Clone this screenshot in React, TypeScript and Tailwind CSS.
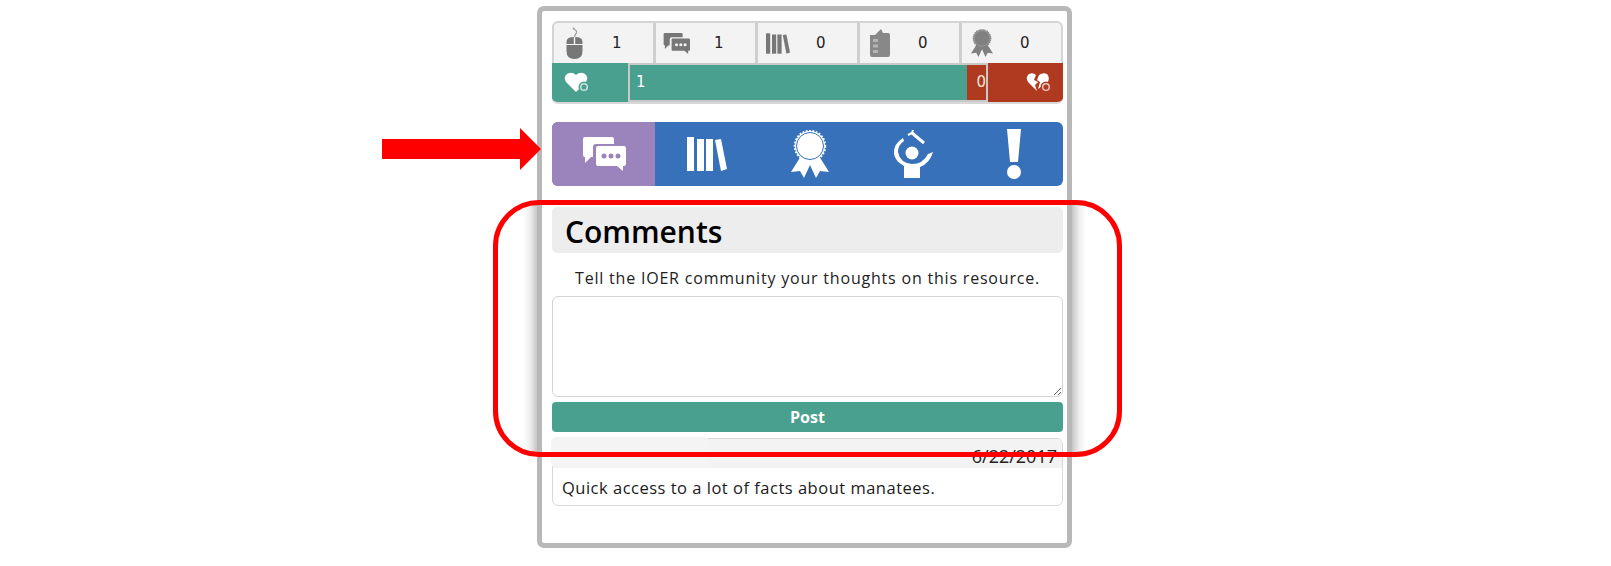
const Mouse = () => (
  <svg width="17" height="32" viewBox="0 0 17 32">
    <path d="M8.500 10 C8.500 7 11 7 10.500 4.500 C10 2.500 7.500 2.500 7 0.500" fill="none" stroke="#999" strokeWidth="1.200" />
    <path d="M0.500 15 Q0.500 10 7.800 10 V17 H0.500 Z M9.200 10 Q16.500 10 16.500 15 V17 H9.200 Z M0.500 18 H16.500 V24 Q16.500 32 8.500 32 Q0.500 32 0.500 24 Z" fill="#777" />
  </svg>
);

const Comments = ({ color, dot }: { color: string; dot: string }) => (
  <svg viewBox="0 0 44 34" className="w-full h-full">
    <path d="M3 0 H30 Q32 0 32 2 V7 H14 Q11 7 11 10 V20 H9 L3 26 V20 Q1 20 1 18 V2 Q1 0 3 0 Z" fill={color} />
    <path d="M16 9 H42 Q44 9 44 11 V27 Q44 29 42 29 H41 V34 L35 29 H16 Q14 29 14 27 V11 Q14 9 16 9 Z" fill={color} />
    <circle cx="22" cy="19" r="2.500" fill={dot} />
    <circle cx="29" cy="19" r="2.500" fill={dot} />
    <circle cx="36" cy="19" r="2.500" fill={dot} />
  </svg>
);

const Books = ({ color }: { color: string }) => (
  <svg viewBox="0 0 40 34" className="w-full h-full">
    <rect x="0" y="0" width="7" height="34" fill={color} />
    <rect x="10" y="2" width="7" height="32" fill={color} />
    <rect x="19" y="2" width="7" height="32" fill={color} />
    <path d="M28 3 L34 2 L40 32 L34 34 Z" fill={color} />
  </svg>
);

const Ribbon = ({ color, hole }: { color: string; hole: string }) => (
  <svg viewBox="0 0 38 48" className="w-full h-full">
    <path d="M10 26 L0 42 L9 41 L13 48 L19 35 L25 48 L29 41 L38 42 L28 26 Z" fill={color} />
    <circle cx="19" cy="16" r="15" fill={color} stroke={color} strokeWidth="2.500" strokeDasharray="1.800 1.500" />
    <circle cx="19" cy="16" r="13.500" fill="none" stroke={hole} strokeWidth="1" />
  </svg>
);

const Clipboard = () => (
  <svg width="20" height="28" viewBox="0 0 20 28">
    <path d="M0 6 H5 L7 4 L11 0 L13 4 H18 Q20 4 20 6 V26 Q20 28 18 28 H2 Q0 28 0 26 Z" fill="#888" />
    <path d="M3 10 H8 V13 H3 Z M3 15.500 H8 V18.500 H3 Z M3 21 H8 V24 H3 Z" fill="#b5b5b5" />
  </svg>
);

const Person = () => (
  <svg width="40" height="48" viewBox="0 0 40 48" fill="white">
    <path d="M19 3 L31 13" stroke="white" strokeWidth="3" />
    <path d="M15 5 L19 3 L20 0" stroke="white" strokeWidth="2" fill="none" />
    <circle cx="19" cy="23" r="6.500" />
    <path d="M10 8 Q0 14 1 24 Q2 31 11 36 V48 H27 V37 Q37 33 40 22 L35 24 Q30 34 19 34 Q7 33 5 22 Q5 15 11 11 Z" />
  </svg>
);

const Exclamation = () => (
  <svg width="16" height="50" viewBox="0 0 16 50" fill="white">
    <path d="M1 0 H15 L12 33 H4 Z" />
    <circle cx="8" cy="43" r="7" />
  </svg>
);

const Heart = ({ broken, bg }: { broken?: boolean; bg: string }) => (
  <svg width="26" height="21" viewBox="0 0 26 21">
    <path
      d={
        broken
          ? "M11 19 L2 10 Q-1 5 3 2 Q7 0 10 3 L8 8 L12 10 L9 13 Z M12 17 L14 10 L11 8 L13 3 Q17 0 21 2 Q24 5 22 10 Z"
          : "M12 20 L2 10 Q-1 5 3 2 Q8 -1 12 3 Q16 -1 21 2 Q25 5 22 10 Z"
      }
      fill="white"
    />
    <circle cx="20" cy="15" r="5.500" fill={bg} />
    <circle cx="20" cy="15" r="3.300" fill="none" stroke="white" strokeOpacity="0.7" strokeWidth="1.500" />
  </svg>
);

const stats = [
  { icon: <Mouse />, value: "1" },
  { icon: <span className="block w-[27px] h-[21px]"><Comments color="#777" dot="#f3f3f3" /></span>, value: "1" },
  { icon: <span className="block w-[24px] h-[21px]"><Books color="#777" /></span>, value: "0" },
  { icon: <Clipboard />, value: "0" },
  { icon: <span className="block w-[22px] h-[28px]"><Ribbon color="#808080" hole="#a5a5a5" /></span>, value: "0" },
];

export default function App() {
  return (
    <div className="relative w-[1611px] h-[566px] bg-white overflow-hidden pl-[537px] pt-[6px] font-['Open_Sans','Noto_Sans',sans-serif] text-[#222]">
      {/* Resource panel */}
      <div className="w-[535px] h-[542px] bg-white border-[5px] border-[#b8b8b8] rounded-[7px] pl-[10px] pr-[4px] pt-[10px]">
        {/* Stats */}
        <div className="flex h-[42px] bg-[#f3f3f3] border-2 border-b-0 border-[#d4d4d4] rounded-t-[6px]">
          {stats.map((s, i) => (
            <div key={i} className={`flex-1 flex items-center pl-[4px] ${i < 4 ? "border-r-[3px] border-[#cfcfcf]" : ""}`}>
              <span className="w-[32px] flex justify-center">{s.icon}</span>
              <span className="ml-[22px] font-['DejaVu_Sans',sans-serif] text-[15px]">{s.value}</span>
            </div>
          ))}
        </div>

        {/* Likes bar */}
        <div className="flex h-[41px] border-b-2 border-[#d8d8d8] rounded-b-[6px] overflow-hidden text-white font-['DejaVu_Sans',sans-serif] text-[15px]">
          <div className="w-[76px] bg-[#4aa08f] flex items-center pl-[12px]">
            <Heart bg="#4aa08f" />
          </div>
          <div className="flex flex-1 border-2 border-[#c9c9c9]">
            <div className="flex-1 bg-[#4aa08f] flex items-center pl-[6px]">1</div>
            <div className="w-[19px] bg-[#b03a20] flex items-center justify-end text-[#f5e6d8]">0</div>
          </div>
          <div className="w-[75px] bg-[#b03a20] flex items-center justify-end pr-[11px]">
            <Heart broken bg="#b03a20" />
          </div>
        </div>

        {/* Tabs */}
        <div className="flex h-[64px] mt-[18px] rounded-[6px] overflow-hidden bg-[#3671b9]">
          <div className="w-[103px] bg-[#9b84bb] flex items-center justify-center">
            <span className="block w-[44px] h-[34px]"><Comments color="white" dot="#9b84bb" /></span>
          </div>
          <div className="w-[103px] flex items-center justify-center">
            <span className="block w-[40px] h-[34px]"><Books color="white" /></span>
          </div>
          <div className="w-[103px] flex items-center justify-center">
            <span className="block w-[38px] h-[48px]"><Ribbon color="white" hole="#3671b9" /></span>
          </div>
          <div className="w-[103px] flex items-center justify-center">
            <Person />
          </div>
          <div className="w-[99px] flex items-center justify-center">
            <Exclamation />
          </div>
        </div>

        {/* Comments */}
        <h2 className="mt-[21px] h-[46px] bg-[#ededed] rounded-[5px] pl-[13px] pt-[3px] flex items-center text-[30px] font-semibold text-black">
          Comments
        </h2>
        <p className="mt-[14px] h-[22px] text-center text-[16px] leading-[22px] tracking-[0.8px]">
          Tell the IOER community your thoughts on this resource.
        </p>
        <textarea className="block mt-[7px] w-full h-[101px] bg-white border-[1.500px] border-[#d4d4d4] rounded-[6px] outline-none" />
        <button className="block mt-[5px] w-full h-[30px] bg-[#4aa08f] rounded-[4px] text-white text-[16px] font-bold">
          Post
        </button>
        <div className="relative mt-[6px] h-[68px] border-[1.500px] border-[#d8d8d8] rounded-[6px]">
          <div className="h-[29px] bg-[#f3f3f3] rounded-t-[5px] flex items-center justify-end pr-[5px] pt-[5px] text-[18px] text-[#222]">
            6/22/2017
          </div>
          {/* patch hiding the commenter name */}
          <div className="absolute -left-[2px] -top-[2px] w-[158px] h-[31px] bg-[#f4f4f4] rounded-[5px]" />
          <p className="pl-[9px] pt-[7px] text-[16.500px] leading-[26px] tracking-[0.5px] text-[#1a1a1a]">
            Quick access to a lot of facts about manatees.
          </p>
        </div>
      </div>

      {/* Arrow annotation */}
      <svg width="170" height="44" viewBox="0 0 170 44" className="absolute left-[381px] top-[127px]">
        <path d="M1 12 H139 V1 L160 22 L139 43 V32 H1 Z" fill="#ff0000" />
      </svg>

      {/* Shadow strips inside the annotation */}
      <div className="absolute left-[523px] top-[205px] w-[14px] h-[248px] bg-gradient-to-l from-[#c6c6c6] via-[#eeeeee] to-transparent" />
      <div className="absolute left-[1072px] top-[205px] w-[14px] h-[248px] bg-gradient-to-r from-[#c6c6c6] via-[#eeeeee] to-transparent" />

      {/* Red outline annotation */}
      <div className="absolute left-[493px] top-[200px] w-[629px] h-[257px] border-[5px] border-[#ff0000] rounded-[46px]" />
    </div>
  );
}
